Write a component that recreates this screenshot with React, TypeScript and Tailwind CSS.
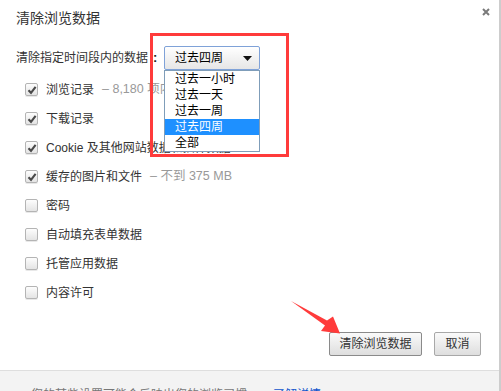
import { useState } from 'react'

const font = { fontFamily: '"Liberation Sans", "Noto Sans CJK SC", sans-serif' }

type Row = { label: string; note?: string; checked: boolean }

const rows: Row[] = [
  { label: '浏览记录', note: '– 8,180 项内容', checked: true },
  { label: '下载记录', checked: true },
  { label: 'Cookie 及其他网站数据和插件数据', checked: true },
  { label: '缓存的图片和文件', note: '– 不到 375 MB', checked: true },
  { label: '密码', checked: false },
  { label: '自动填充表单数据', checked: false },
  { label: '托管应用数据', checked: false },
  { label: '内容许可', checked: false },
]

const ranges = ['过去一小时', '过去一天', '过去一周', '过去四周', '全部']

function Checkbox({ checked }: { checked: boolean }) {
  return (
    <span className="w-[13px] h-[13px] rounded-[2px] border border-[#b4b4b4] bg-gradient-to-b from-[#fdfdfd] to-[#e4e4e4] shadow-[0_1px_0_#e8e8e8] flex items-center justify-center">
      {checked && (
        <svg width="10" height="10" viewBox="0 0 10 10">
          <path d="M1.5 5.2 L4 7.8 L8.6 1.8" fill="none" stroke="#4a4a4a" strokeWidth="2.1" />
        </svg>
      )}
    </span>
  )
}

export default function App() {
  const [selected] = useState(3)

  return (
    <div className="w-[501px] h-[391px] overflow-hidden flex bg-white text-[#333]" style={font}>
      <div className="relative flex-1 flex flex-col border-r-2 border-[#cdcdcd]">
        {/* header */}
        <div className="flex justify-between pl-4 pr-[9px]">
          <h1 className="pt-[8px] text-[14px] leading-5 text-[#333]">清除浏览数据</h1>
          <svg className="mt-[8px]" width="8" height="8" viewBox="0 0 8 8">
            <path d="M1 1 L7 7 M7 1 L1 7" stroke="#7a7a7a" strokeWidth="2" />
          </svg>
        </div>

        {/* time range */}
        <div className="mt-[18px] flex items-center h-6 pl-4 text-[12px]">
          <span className="w-[148px] shrink-0 flex items-center whitespace-nowrap text-[#333]">
            清除指定时间段内的数据
            <span className="ml-[5px] font-bold text-[13px] text-[#222]">:</span>
          </span>
          <div className="relative w-[96px] h-6">
            <div className="h-full flex items-center justify-between pl-[10px] pr-[7px] border border-[#7fa2d8] rounded-[2px] bg-gradient-to-b from-[#ffffff] to-[#e6e6e6] text-black">
              <span>{ranges[selected]}</span>
              <svg width="9" height="5" viewBox="0 0 9 5">
                <path d="M0 0 H9 L4.5 5 Z" fill="#111" />
              </svg>
            </div>
            {/* open listbox */}
            <ul className="absolute left-0 top-full w-[96px] border border-[#7f9db9] bg-white z-10">
              {ranges.map((r, i) => (
                <li
                  key={r}
                  className={`h-4 leading-4 pl-[10px] text-[12px] ${i === selected ? 'bg-[#1e90ff] text-white' : 'text-black'}`}
                >
                  {r}
                </li>
              ))}
            </ul>
          </div>
        </div>

        {/* items */}
        <div className="mt-[5px] flex flex-col pl-[25px] text-[12px]">
          {rows.map((r) => (
            <label key={r.label} className="h-[29px] flex items-center gap-2">
              <Checkbox checked={r.checked} />
              <span className="text-[#333]">{r.label}</span>
              {r.note && <span className="text-[#999] text-[12.5px]">{r.note}</span>}
            </label>
          ))}
        </div>

        {/* buttons */}
        <div className="mt-[25px] flex justify-end gap-3 pr-[18px] text-[12px]">
          <button className="h-6 w-[93px] rounded-[2px] border border-[#8a8a8a] bg-gradient-to-b from-[#fafafa] to-[#dedede] text-[#333]">
            清除浏览数据
          </button>
          <button className="h-6 w-[47px] rounded-[2px] border border-[#a8a8a8] bg-gradient-to-b from-[#fafafa] to-[#dedede] text-[#333]">
            取消
          </button>
        </div>

        {/* footer */}
        <div className="mt-[14px] flex-1 border-t border-[#dedede] bg-[#f3f3f3] pt-[16px] pl-[31px] text-[12px] leading-4 whitespace-nowrap">
          <span className="text-[#777]">您的某些设置可能会反映出您的浏览习惯。</span>
          <span className="text-[#1155cc] ml-[14px]">了解详情</span>
        </div>

        {/* annotation: red frame */}
        <div className="absolute left-[150px] top-[33px] w-[139px] h-[124px] border-[3px] border-[#ff3b3b] pointer-events-none z-20" />

        {/* annotation: red arrow */}
        <svg className="absolute left-0 top-0 pointer-events-none z-20" width="499" height="391">
          <polygon points="291,301 327,320.5 333,316.5 340,333.5 321,331 325,325.5" fill="#ff3b3b" />
        </svg>
      </div>
    </div>
  )
}
